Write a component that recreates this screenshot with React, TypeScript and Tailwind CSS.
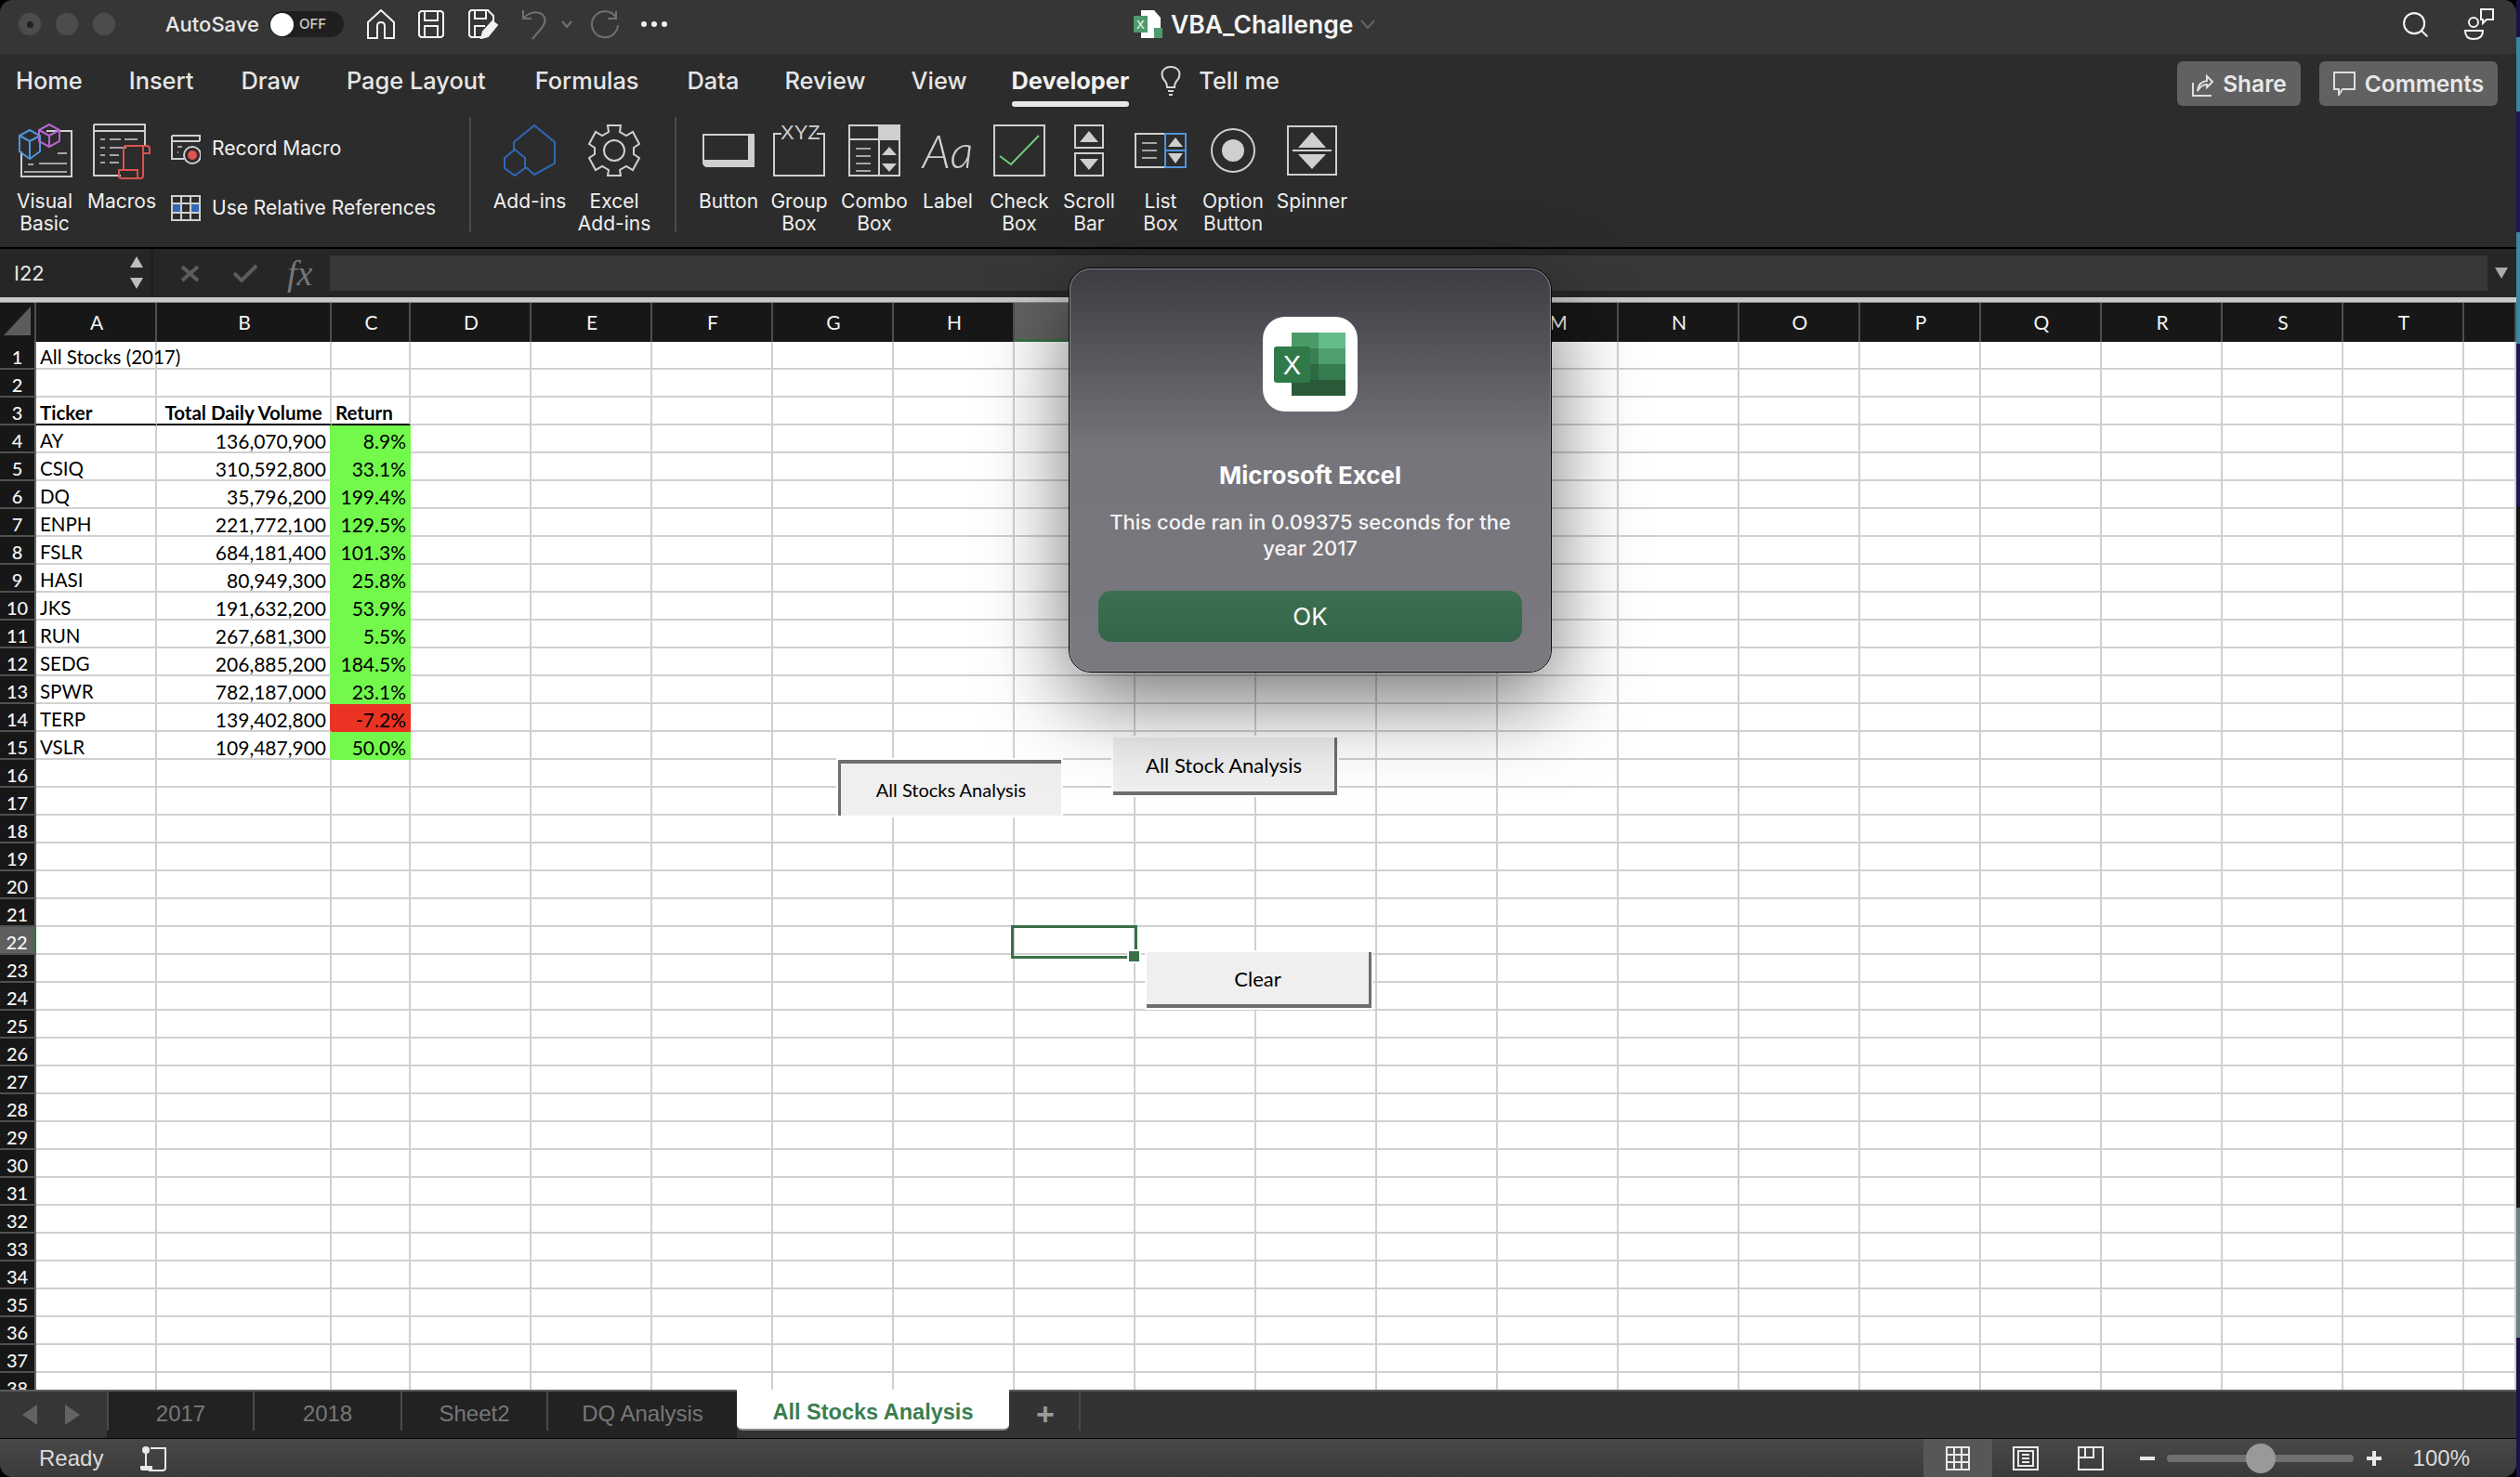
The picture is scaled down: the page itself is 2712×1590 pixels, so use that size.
import type { ReactNode } from 'react';
import { Search } from 'lucide-react';

const UI = "font-['Inter',sans-serif]";
const SHEET = "font-['Lato',sans-serif]";

const colWidths = [130, 188, 85, 130, 130, 130, 130, 130, 130, 130, 130, 130, 130, 130, 130, 130, 130, 130, 130, 130, 56];
const colNames = ['A', 'B', 'C', 'D', 'E', 'F', 'G', 'H', 'I', 'J', 'K', 'L', 'M', 'N', 'O', 'P', 'Q', 'R', 'S', 'T', ''];

const stocks = [
  ['AY', '136,070,900', '8.9%'],
  ['CSIQ', '310,592,800', '33.1%'],
  ['DQ', '35,796,200', '199.4%'],
  ['ENPH', '221,772,100', '129.5%'],
  ['FSLR', '684,181,400', '101.3%'],
  ['HASI', '80,949,300', '25.8%'],
  ['JKS', '191,632,200', '53.9%'],
  ['RUN', '267,681,300', '5.5%'],
  ['SEDG', '206,885,200', '184.5%'],
  ['SPWR', '782,187,000', '23.1%'],
  ['TERP', '139,402,800', '-7.2%'],
  ['VSLR', '109,487,900', '50.0%'],
];

const menuTabs = [
  { label: 'Home', cls: 'ml-[17px]' },
  { label: 'Insert', cls: 'ml-[50px]' },
  { label: 'Draw', cls: 'ml-[51px]' },
  { label: 'Page Layout', cls: 'ml-[50px]' },
  { label: 'Formulas', cls: 'ml-[53px]' },
  { label: 'Data', cls: 'ml-[52px]' },
  { label: 'Review', cls: 'ml-[49px]' },
  { label: 'View', cls: 'ml-[49px]' },
];

// bits of the desktop showing past the window's right edge
const desktopStrip = [
  'h-[40px] bg-[#1c1248]',
  'h-[80px] bg-[#3a85a8]',
  'h-[130px] bg-[#22155c]',
  'h-[120px] bg-[#3a85a8]',
  'h-[175px] bg-[#22155c]',
  'h-[755px] bg-[#141414]',
  'h-[140px] bg-[#6f7f86]',
  'h-[150px] bg-[#1c1248]',
];

function Tri({ up, className }: { up?: boolean; className: string }) {
  return (
    <svg viewBox="0 0 14 12" className={className} fill="currentColor">
      <path d={up ? 'M7 0 14 12H0Z' : 'M0 0H14L7 12Z'} />
    </svg>
  );
}

function Ico({ w, h, children, cls = '' }: { w: number; h: number; children: ReactNode; cls?: string }) {
  return (
    <svg width={w} height={h} viewBox={`0 0 ${w} ${h}`} fill="none" stroke="#cfcfcf" strokeWidth="2" className={cls}>
      {children}
    </svg>
  );
}

function RibbonItem({ cls, icon, lines }: { cls: string; icon: ReactNode; lines: string[] }) {
  return (
    <div className={`flex flex-col items-center shrink-0 ${cls}`}>
      <div className="h-[68px] flex items-center justify-center">{icon}</div>
      <div className="mt-[9px] text-center text-[21px] leading-[24px] text-[#f0f0f0] whitespace-nowrap">
        {lines.map((l) => (
          <div key={l}>{l}</div>
        ))}
      </div>
    </div>
  );
}

function Sep() {
  return <div className="w-[2px] h-[124px] mt-[-2px] bg-[#4a4a4a] shrink-0" />;
}

const visualIcon = (
  <Ico w={60} h={58}>
    <path d="M32 8H59V57H5V30" />
    <path d="M36 19 M44 32H54M24 43H54M12 44H18M8 52H54" stroke="#a5a5a5" />
    <path d="M3 13 14 7 25 13V30L14 38 3 30ZM3 13 14 19 25 13M14 19V38" stroke="#4f95d8" />
    <path d="M24 7 35 1 46 7V19L35 25 24 19ZM24 7 35 13 46 7M35 13V25" stroke="#b865cd" />
  </Ico>
);

const macrosIcon = (
  <Ico w={62} h={62}>
    <path d="M1 3H56V26M1 10H56M1 3V58H30" />
    <path d="M8 19H13M18 19H30M34 19H48M8 28H13M18 28H36M8 36H13M18 36H28M8 44H13M18 44H28" stroke="#a5a5a5" />
    <path d="M33 51V29Q33 26 36 26H58Q61 26 61 29V34H54V58Q54 61 51 61H31Q28 61 28 58V52H48V61M54 26V34" stroke="#d9534f" />
  </Ico>
);

const addinsIcon = (
  <Ico w={56} h={58}>
    <path d="M11 28V20L33 2 55 20V43L33 55 24 47" stroke="#2f69b5" />
    <path d="M1 37 12 28 23 37V48L12 56 1 48Z" stroke="#2f69b5" />
  </Ico>
);

const gearIcon = (
  <Ico w={58} h={58}>
    <path d="M22 2H36L35 9 42 13 49 9 56 22 50 26V33L56 37 49 50 42 46 35 50 36 56H22L23 50 16 46 9 50 2 37 8 33V26L2 22 9 9 16 13 23 9Z" />
    <circle cx="29" cy="29" r="11" />
  </Ico>
);

const buttonIcon = (
  <Ico w={56} h={36}>
    <path d="M1 1H55V35H6Q1 35 1 30Z" />
    <path d="M1 29H50V1H55V35H6Q1 35 1 29Z" fill="#cfcfcf" />
  </Ico>
);

const groupIcon = (
  <div className="relative w-[56px] h-[56px]">
    <Ico w={56} h={56}>
      <path d="M9 10H1V55H55V10H47" />
    </Ico>
    <span className="absolute left-[8px] top-[-3px] text-[22px] leading-[24px] font-light text-[#cfcfcf] font-['Liberation_Sans',sans-serif]">XYZ</span>
  </div>
);

const comboIcon = (
  <Ico w={56} h={56}>
    <rect x="1" y="1" width="54" height="54" />
    <path d="M33 1H55V15H33Z" fill="#cfcfcf" />
    <path d="M1 16H55M33 16V55" />
    <path d="M8 26H24M8 34H24M8 42H24M8 50H24" stroke="#a5a5a5" />
    <path d="M44 24 52 33H36ZM36 42H52L44 51Z" fill="#cfcfcf" stroke="none" />
  </Ico>
);

const labelIcon = (
  <span className="text-[50px] leading-[48px] italic font-light text-[#cfcfcf] font-['Lato',sans-serif]">Aa</span>
);

const checkIcon = (
  <Ico w={56} h={56}>
    <rect x="1" y="1" width="54" height="54" />
    <path d="M7 34 19 43 49 12" stroke="#6fcf7c" />
  </Ico>
);

const scrollIcon = (
  <Ico w={32} h={56}>
    <rect x="1" y="1" width="30" height="24" />
    <rect x="1" y="31" width="30" height="24" />
    <path d="M16 7 26 19H6ZM6 37H26L16 49Z" fill="#cfcfcf" stroke="none" />
  </Ico>
);

const listIcon = (
  <Ico w={56} h={38}>
    <path d="M32 1H1V37H32" />
    <path d="M8 11H24M8 19H24M8 27H24" stroke="#a5a5a5" />
    <rect x="33" y="1" width="22" height="36" stroke="#4f95d8" />
    <path d="M33 19H55" stroke="#4f95d8" />
    <path d="M44 5 52 15H36ZM36 22H52L44 33Z" fill="#cfcfcf" stroke="none" />
  </Ico>
);

const optionIcon = (
  <Ico w={48} h={48}>
    <ellipse cx="24" cy="24" rx="23" ry="23" />
    <ellipse cx="24" cy="24" rx="12" ry="12" fill="#cfcfcf" stroke="none" />
  </Ico>
);

const spinnerIcon = (
  <Ico w={54} h={54}>
    <rect x="1" y="1" width="52" height="52" />
    <path d="M27 7 42 24H12ZM12 31H42L27 47Z" fill="#cfcfcf" stroke="none" />
    <path d="M6 27H48" />
  </Ico>
);

function TitleBar() {
  return (
    <div className="h-[58px] bg-[#363636] flex items-center shrink-0 relative pb-[6px]">
      <div className="flex items-center gap-[14px] ml-[19px]">
        <div className="w-[26px] h-[26px] rounded-full bg-[#4c4c4c] border border-[#3c3c3c] flex items-center justify-center">
          <div className="w-[7px] h-[7px] rounded-full bg-[#202020]" />
        </div>
        <div className="w-[26px] h-[26px] rounded-full bg-[#4c4c4c] border border-[#3c3c3c]" />
        <div className="w-[26px] h-[26px] rounded-full bg-[#4c4c4c] border border-[#3c3c3c]" />
      </div>
      <span className="ml-[53px] text-[22px] font-medium text-[#e8e8e8]">AutoSave</span>
      <div className="ml-[11px] w-[80px] h-[28px] rounded-full bg-[#1f1f1f] flex items-center pl-[1px]">
        <div className="w-[25px] h-[25px] rounded-full bg-white" />
        <span className="ml-[6px] text-[15px] font-medium text-[#d0d0d0]">OFF</span>
      </div>
      <Ico w={30} h={32} cls="ml-[25px]">
        <path d="M1 14 15 1 29 14V31H19V18Q19 14 15 14 11 14 11 18V31H1Z" stroke="#f2f2f2" />
      </Ico>
      <Ico w={28} h={30} cls="ml-[25px]">
        <path d="M3 1H25L27 3V27L25 29H3L1 27V3ZM7 1V11H21V1M7 29V17H21V29" stroke="#f2f2f2" />
      </Ico>
      <Ico w={32} h={32} cls="ml-[26px]">
        <path d="M16 30H3L1 28V3L3 1H21L27 7V13M7 1V10H19V1M7 30V18H18" stroke="#f2f2f2" />
        <path d="M14 31 16 24 26 13 31 17 21 29Z" fill="#f2f2f2" stroke="#f2f2f2" />
      </Ico>
      <Ico w={28} h={34} cls="ml-[25px]">
        <path d="M2 2V11H11M2 11Q12 1 22 6 29 12 22 21L12 33" stroke="#707070" />
      </Ico>
      <Ico w={12} h={8} cls="ml-[15px]">
        <path d="M1 1 6 7 11 1" stroke="#707070" />
      </Ico>
      <Ico w={32} h={34} cls="ml-[18px]">
        <path d="M29 3V11H20M29 10A14 14 0 1 0 31 18" stroke="#707070" />
      </Ico>
      <div className="ml-[24px] flex gap-[5px]">
        <div className="w-[6px] h-[6px] rounded-full bg-[#f0f0f0]" />
        <div className="w-[6px] h-[6px] rounded-full bg-[#f0f0f0]" />
        <div className="w-[6px] h-[6px] rounded-full bg-[#f0f0f0]" />
      </div>

      <div className="absolute left-[1220px] top-[10px] flex items-center">
        <Ico w={32} h={32}>
          <path d="M8 1H22L29 9V31H8Z" fill="#ffffff" stroke="none" />
          <rect x="0" y="7" width="15" height="18" fill="#4f9a6e" stroke="none" />
          <text x="3" y="21" fontSize="13" fill="#ffffff" stroke="none" fontFamily="Liberation Sans">X</text>
          <rect x="22" y="20" width="9" height="11" fill="#4f9a6e" stroke="none" />
        </Ico>
        <span className="ml-[8px] text-[26.5px] font-semibold text-[#f4f4f4] leading-[32px]">VBA_Challenge</span>
        <Ico w={16} h={10} cls="ml-[8px]">
          <path d="M1 1 8 9 15 1" stroke="#666666" />
        </Ico>
      </div>

      <div className="ml-auto mr-[24px] flex items-center gap-[36px]">
        <Search size={33} strokeWidth={1.5} color="#f2f2f2" />
        <Ico w={32} h={34}>
          <circle cx="10" cy="15" r="5" stroke="#f2f2f2" />
          <path d="M1 24H20Q20 33 10 33 1 33 1 24Z" stroke="#f2f2f2" />
          <path d="M18 1H31V12H24L20 16V12H18Z" stroke="#f2f2f2" />
        </Ico>
      </div>
    </div>
  );
}

function MenuRow() {
  return (
    <div className="h-[62px] flex items-start shrink-0 relative">
      <div className="flex items-center h-[58px] text-[25.4px] text-[#e6e6e6] font-medium">
        {menuTabs.map((t) => (
          <span key={t.label} className={t.cls}>{t.label}</span>
        ))}
        <span className="ml-[48px] font-bold text-[#f0f0f0] relative">
          Developer
          <span className="absolute left-0 right-0 top-[41px] h-[6px] rounded-full bg-[#e8e8e8]" />
        </span>
        <Ico w={24} h={32} cls="ml-[33px]">
          <path d="M8 23Q8 18 4 14 0 6 7 2 12 0 17 2 24 6 20 14 16 18 16 23ZM9 27H15M10 31H14" stroke="#d8d8d8" />
        </Ico>
        <span className="ml-[18px]">Tell me</span>
      </div>
      <div className="ml-auto mr-[20px] mt-[8px] flex gap-[20px] text-[24.5px] font-semibold text-[#e8e8e8]">
        <div className="w-[133px] h-[48px] rounded-[6px] bg-[#616161] flex items-center justify-center gap-[10px]">
          <Ico w={24} h={28}>
            <path d="M2 13V27H22M7 22Q8 12 17 11V6L23 12 17 18V15Q11 15 7 22Z" stroke="#dedede" />
          </Ico>
          Share
        </div>
        <div className="w-[192px] h-[48px] rounded-[6px] bg-[#616161] flex items-center justify-center gap-[10px]">
          <Ico w={24} h={26}>
            <path d="M1 1H23V19H10L6 25V19H1Z" stroke="#dedede" />
          </Ico>
          Comments
        </div>
      </div>
    </div>
  );
}

function Ribbon() {
  return (
    <div className="h-[146px] flex items-start pt-[8px] shrink-0">
      <RibbonItem cls="w-[80px] ml-[8px]" icon={visualIcon} lines={['Visual', 'Basic']} />
      <RibbonItem cls="w-[86px]" icon={macrosIcon} lines={['Macros']} />
      <div className="ml-[10px] w-[321px] shrink-0 flex flex-col text-[21px] text-[#f0f0f0]">
        <div className="flex items-center h-[34px] mt-[15px]">
          <Ico w={32} h={33}>
            <path d="M1 2H31V8M1 8H31M1 2V27H14" stroke="#cfcfcf" />
            <path d="M7 14H12M7 20H8" stroke="#a5a5a5" />
            <circle cx="23" cy="23" r="9" stroke="#cfcfcf" />
            <circle cx="23" cy="23" r="5" fill="#df5450" stroke="none" />
          </Ico>
          <span className="ml-[12px]">Record Macro</span>
        </div>
        <div className="flex items-center h-[30px] mt-[32px]">
          <svg width="32" height="28" viewBox="0 0 32 28" fill="none" stroke="#cfcfcf" strokeWidth="2">
            <rect x="1" y="9" width="10" height="10" fill="#2f69b5" stroke="none" />
            <rect x="21" y="9" width="10" height="10" fill="#2f69b5" stroke="none" />
            <rect x="1" y="1" width="30" height="26" />
            <path d="M11 1V27M21 1V27M1 9H31M1 19H31" />
          </svg>
          <span className="ml-[12px]">Use Relative References</span>
        </div>
      </div>
      <Sep />
      <RibbonItem cls="w-[76px] ml-[25px]" icon={addinsIcon} lines={['Add-ins']} />
      <RibbonItem cls="w-[76px] ml-[15px]" icon={gearIcon} lines={['Excel', 'Add-ins']} />
      <div className="ml-[27px]"><Sep /></div>
      <RibbonItem cls="w-[66px] ml-[23px]" icon={buttonIcon} lines={['Button']} />
      <RibbonItem cls="w-[62px] ml-[12px]" icon={groupIcon} lines={['Group', 'Box']} />
      <RibbonItem cls="w-[64px] ml-[18px]" icon={comboIcon} lines={['Combo', 'Box']} />
      <RibbonItem cls="w-[58px] ml-[18px]" icon={labelIcon} lines={['Label']} />
      <RibbonItem cls="w-[64px] ml-[16px]" icon={checkIcon} lines={['Check', 'Box']} />
      <RibbonItem cls="w-[62px] ml-[12px]" icon={scrollIcon} lines={['Scroll', 'Bar']} />
      <RibbonItem cls="w-[64px] ml-[14px]" icon={listIcon} lines={['List', 'Box']} />
      <RibbonItem cls="w-[72px] ml-[10px]" icon={optionIcon} lines={['Option', 'Button']} />
      <RibbonItem cls="w-[86px] ml-[6px]" icon={spinnerIcon} lines={['Spinner']} />
    </div>
  );
}

function FormulaBar() {
  return (
    <div className="h-[52px] bg-[#262626] flex items-center shrink-0 border-t-2 border-black box-content">
      <div className="w-[162px] h-full flex items-center pl-[15px] relative text-[22px] text-[#e8e8e8]">
        I22
        <div className="absolute right-[8px] top-[8px] flex flex-col gap-[11px] text-[#bdbdbd]">
          <Tri up className="w-[14px] h-[12px]" />
          <Tri className="w-[14px] h-[12px]" />
        </div>
      </div>
      <div className="w-[3px] h-full bg-[#1f1f1f]" />
      <Ico w={21} h={19} cls="ml-[29px]">
        <path d="M2 2 19 17M19 2 2 17" stroke="#5c5c5c" strokeWidth="4" />
      </Ico>
      <Ico w={28} h={20} cls="ml-[35px]">
        <path d="M2 10 10 18 26 2" stroke="#5c5c5c" strokeWidth="4" />
      </Ico>
      <span className="ml-[31px] w-[46px] text-[38px] leading-[40px] italic text-[#777777] font-['Liberation_Serif',serif]">fx</span>
      <div className="w-[2322px] h-[38px] bg-[#383838]" />
      <Tri className="w-[14px] h-[12px] ml-[8px] text-[#aaaaaa]" />
    </div>
  );
}

function Cell({ col, row }: { col: number; row: number }) {
  const base = 'h-[30px] border-b-2 border-r-2 border-[#d0d0d0] overflow-visible whitespace-nowrap text-[20.5px] leading-[33px] text-black bg-white';
  if (row === 1 && col === 0) {
    return <div className={`${base} border-r-0 px-[4px] relative z-10`}>All Stocks (2017)</div>;
  }
  if (row === 3 && col < 3) {
    const labels = ['Ticker', 'Total Daily Volume', 'Return'];
    return (
      <div className={`${base} border-b-[#000000] font-bold ${col === 1 ? 'text-center' : 'px-[4px]'}`}>
        {labels[col]}
      </div>
    );
  }
  if (row >= 4 && row <= 15 && col < 3) {
    const s = stocks[row - 4];
    const red = s[0] === 'TERP';
    if (col === 0) return <div className={`${base} px-[4px]`}>{s[0]}</div>;
    if (col === 1) {
      return (
        <div className={`${base} !text-[21px] pr-[4px] text-right ${red ? 'border-r-[#ea3323]' : 'border-r-[#72f94c]'}`}>
          {s[1]}
        </div>
      );
    }
    return (
      <div className={`h-[30px] text-[21px] leading-[33px] text-black pr-[5px] text-right ${red ? 'bg-[#ea3323]' : 'bg-[#72f94c]'}`}>
        {s[2]}
      </div>
    );
  }
  return <div className={base} />;
}

function Sheet() {
  const rows = Array.from({ length: 38 }, (_, i) => i + 1);
  return (
    <div className={`flex-1 min-h-0 overflow-hidden relative bg-white ${SHEET}`}>
      <div className="h-[6px] bg-[#c8c8c8] border-b border-[#8a8a8a]" />
      <div className="flex h-[42px] bg-[#171717]">
        <div className="w-[39px] shrink-0 border-r-2 border-[#4e4e4e] relative">
          <svg width="34" height="36" className="absolute left-0 top-[2px]">
            <path d="M33 2V33H4Z" fill="#5c5c5c" />
          </svg>
        </div>
        {colWidths.map((w, i) => (
          <div
            key={i}
            style={{ width: w }}
            className={`shrink-0 pl-[2px] border-r-2 border-[#4e4e4e] flex items-center justify-center text-[21px] text-[#f4f4f4] ${colNames[i] === 'I' ? 'bg-[#626262] border-b-[3px] border-b-[#3a7048]' : ''}`}
          >
            {colNames[i]}
          </div>
        ))}
      </div>
      {rows.map((r) => (
        <div key={r} className="flex h-[30px]">
          <div className={`w-[39px] shrink-0 h-[30px] pt-[4px] border-b-2 border-[#505050] flex items-center justify-center text-[20px] font-medium text-[#f4f4f4] ${r === 22 ? 'bg-[#5f5f5f] border-r-[3px] border-r-[#3a7048]' : 'bg-[#171717] border-r-2 border-r-[#6a6a6a]'}`}>
            {r}
          </div>
          {colWidths.map((w, i) => (
            <div key={i} style={{ width: w }} className="shrink-0">
              <Cell col={i} row={r} />
            </div>
          ))}
        </div>
      ))}

      {/* form buttons and the selection sit on top of the grid */}
      <div className="absolute left-[902px] top-[498px] w-[240px] h-[60px] bg-[#efefef] border-t-[4px] border-l-[3px] border-[#6e6e6e] outline-2 outline-white flex items-center justify-center text-[20px] text-black">
        All Stocks Analysis
      </div>
      <div className="absolute left-[1198px] top-[474px] w-[241px] h-[62px] bg-[#efefef] border-b-[4px] border-r-[3px] border-[#6e6e6e] outline-2 outline-white flex items-center justify-center text-[22px] text-black">
        All Stock Analysis
      </div>
      <div className="absolute left-[1234px] top-[705px] w-[242px] h-[60px] bg-[#efefef] border-b-[4px] border-r-[3px] border-[#6e6e6e] outline-2 outline-white flex items-center justify-center text-[22px] text-black">
        Clear
      </div>
      <div className="absolute left-[1088px] top-[676px] w-[136px] h-[36px] border-[3px] border-[#3a7048]" />
      <div className="absolute left-[1215px] top-[704px] w-[11px] h-[11px] bg-[#3a7048] outline-2 outline-white" />
    </div>
  );
}

function TabBar() {
  const tabs = [
    { label: '2017', cls: 'w-[157px]' },
    { label: '2018', cls: 'w-[159px]' },
    { label: 'Sheet2', cls: 'w-[157px]' },
    { label: 'DQ Analysis', cls: 'w-[205px]' },
  ];
  return (
    <div className="h-[50px] shrink-0 border-t-2 border-[#5a5a5a] bg-[#333333] flex font-['Liberation_Sans',sans-serif] border-b border-b-black box-content">
      <div className="w-[115px] flex items-center gap-[30px] pl-[24px] bg-[#363636] text-[#636363]">
        <svg width="16" height="22" viewBox="0 0 16 22" fill="currentColor"><path d="M16 0V22L0 11Z" /></svg>
        <svg width="16" height="22" viewBox="0 0 16 22" fill="currentColor"><path d="M0 0V22L16 11Z" /></svg>
      </div>
      <div className="flex bg-[#222222] h-full">
        {tabs.map((t) => (
          <div key={t.label} className={`${t.cls} h-[42px] pt-[6px] flex items-center justify-center border-l-2 border-[#4a4a4a] text-[24px] text-[#777777]`}>
            {t.label}
          </div>
        ))}
      </div>
      <div className="w-[293px] h-[44px] mt-[-2px] pt-[8px] bg-white rounded-b-[6px] border-b-2 border-[#8a8a8a] flex items-center justify-center text-[23.5px] font-bold text-[#3a7d50]">
        All Stocks Analysis
      </div>
      <div className="w-[77px] h-[42px] pt-[6px] pl-[3px] flex items-center justify-center border-r-2 border-[#4a4a4a] text-[34px] font-bold text-[#9a9a9a]">
        +
      </div>
    </div>
  );
}

function StatusBar() {
  return (
    <div className="h-[41px] shrink-0 bg-gradient-to-b from-[#484848] to-[#3a3a3a] flex items-center font-['Liberation_Sans',sans-serif]">
      <span className="ml-[42px] text-[24px] text-[#dadada]">Ready</span>
      <Ico w={32} h={28} cls="ml-[39px]">
        <circle cx="7" cy="5" r="4" fill="#e8e8e8" stroke="none" />
        <path d="M7 9V22M12 3H28V24Q28 27 25 27H10" stroke="#e8e8e8" />
        <path d="M1 22H14V27H3Q1 27 1 25Z" fill="#e8e8e8" stroke="none" />
      </Ico>
      <div className="ml-auto h-full w-[74px] bg-[#575757] flex items-center justify-center">
        <svg width="26" height="26" viewBox="0 0 26 26" fill="none" stroke="#e8e8e8" strokeWidth="2">
          <rect x="1" y="1" width="24" height="24" />
          <path d="M9 1V25M17 1V25M1 9H25M1 17H25" />
        </svg>
      </div>
      <svg width="28" height="26" viewBox="0 0 28 26" fill="none" stroke="#e8e8e8" strokeWidth="2" className="ml-[22px]">
        <rect x="1" y="1" width="26" height="24" />
        <rect x="6" y="5" width="16" height="16" />
        <path d="M10 9H18M10 13H18M10 17H18" />
      </svg>
      <svg width="28" height="26" viewBox="0 0 28 26" fill="none" stroke="#e8e8e8" strokeWidth="2" className="ml-[42px]">
        <path d="M1 1H27V25H1ZM8 1V12H1M8 12H17V1" />
      </svg>
      <div className="ml-[39px] w-[16px] h-[4px] bg-[#e8e8e8]" />
      <div className="ml-[13px] w-[201px] h-[8px] rounded-full bg-[#6f6f6f] relative">
        <div className="absolute left-[85px] top-[-12px] w-[32px] h-[32px] rounded-full bg-[#999999]" />
      </div>
      <div className="ml-[14px] w-[16px] h-[16px] relative">
        <div className="absolute left-0 top-[6px] w-[16px] h-[4px] bg-[#e8e8e8]" />
        <div className="absolute left-[6px] top-0 w-[4px] h-[16px] bg-[#e8e8e8]" />
      </div>
      <span className="ml-[34px] mr-[50px] text-[24px] text-[#dadada]">100%</span>
    </div>
  );
}

function ExcelLogo() {
  return (
    <div className="w-[102px] h-[102px] rounded-[24px] bg-white flex items-center justify-center">
      <svg width="78" height="70" viewBox="0 0 78 70">
        <rect x="19" y="1" width="29" height="17" fill="#4a9a68" />
        <rect x="48" y="1" width="29" height="17" fill="#61bc87" />
        <rect x="19" y="18" width="29" height="17" fill="#3b7f55" />
        <rect x="48" y="18" width="29" height="17" fill="#4f9f6e" />
        <rect x="19" y="35" width="29" height="17" fill="#2c6a44" />
        <rect x="48" y="35" width="29" height="17" fill="#367c4f" />
        <rect x="19" y="52" width="58" height="17" fill="#2a5a38" />
        <rect x="0" y="16" width="39" height="39" rx="3" fill="#2f7a48" />
        <text x="19.5" y="46" fontSize="29" textAnchor="middle" fill="#ffffff" fontFamily="Liberation Sans">X</text>
      </svg>
    </div>
  );
}

function Dialog() {
  return (
    <div className={`absolute left-[1150px] top-[288px] w-[520px] h-[436px] rounded-[24px] border border-black outline outline-1 -outline-offset-2 outline-[#8a8a8e] bg-gradient-to-b from-[#3e3c43] via-[#76757c] via-45% to-[#7a797f] shadow-[0_30px_90px_rgba(0,0,0,0.55)] flex flex-col items-center pt-[52px] z-20 ${UI}`}>
      <ExcelLogo />
      <div className="mt-[53px] text-[26px] leading-[32px] font-bold text-white">Microsoft Excel</div>
      <div className="mt-[20px] w-[450px] text-center text-[22px] leading-[28px] font-medium text-[#f4f4f4]">
        This code ran in 0.09375 seconds for the year 2017
      </div>
      <div className="mt-[32px] w-[456px] h-[55px] rounded-[14px] bg-gradient-to-b from-[#3c7050] to-[#33664a] flex items-center justify-center text-[26px] text-white">
        OK
      </div>
    </div>
  );
}

export default function App() {
  return (
    <div className="w-[2712px] h-[1590px] bg-black flex overflow-hidden">
      <div className="w-[2708px] h-[1590px] flex flex-col overflow-hidden rounded-[14px] bg-[#2c2c2c] relative shrink-0">
        <div className={`contents ${UI}`}>
          <TitleBar />
          <MenuRow />
          <Ribbon />
          <FormulaBar />
        </div>
        <Sheet />
        <TabBar />
        <StatusBar />
        <Dialog />
      </div>
      <div className="w-[4px] flex flex-col">
        {desktopStrip.map((c) => (
          <div key={c} className={c} />
        ))}
      </div>
    </div>
  );
}
